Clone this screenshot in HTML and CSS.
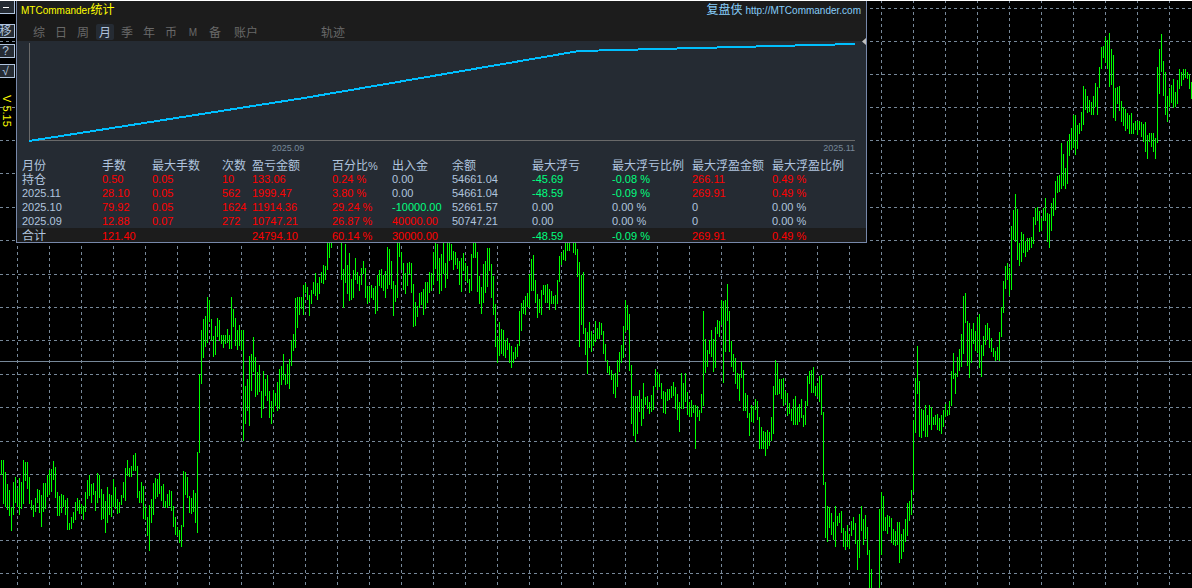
FILE: index.html
```html
<!DOCTYPE html>
<html lang="zh-CN">
<head>
<meta charset="utf-8">
<title>MTCommander统计</title>
<link rel="stylesheet" href="styles.css">
</head>
<body>
<main class="stage">
  <svg class="market" aria-hidden="true">
    <path class="grid" id="grid"/>
    <path class="price" d="M0 361.5H4000"/>
    <path class="bars" id="bars"/>
  </svg>
  <div class="topline"></div>
  <div class="overlay">
    <aside class="rail">
      <button class="tool tool-first" type="button" aria-label="最小化"><svg width="6" height="2"><path class="dash" d="M0 1H6"/></svg></button>
      <button class="tool" type="button">移</button>
      <button class="tool" type="button">?</button>
      <button class="tool" type="button">√</button>
      <span class="version">V 5.15</span>
    </aside>
    <section class="panel">
      <header class="head">
        <h1 class="title">MTCommander<span class="cjk">统计</span></h1>
        <a class="site" href="http://MTCommander.com"><span class="cjk">复盘侠</span> http://MTCommander.com</a>
      </header>
      <nav class="tabs">
        <button class="tab" type="button">综</button>
        <button class="tab" type="button">日</button>
        <button class="tab" type="button">周</button>
        <button class="tab active" type="button">月</button>
        <button class="tab" type="button">季</button>
        <button class="tab" type="button">年</button>
        <button class="tab" type="button">币</button>
        <button class="tab latin" type="button">M</button>
        <button class="tab" type="button">备</button>
        <button class="tab wide" type="button">账户</button>
        <button class="tab wide track" type="button">轨迹</button>
        <svg class="marker" width="4" height="7" viewBox="0 0 4 7"><path d="M4 0V7L0 3.5Z"/></svg>
      </nav>
      <div class="curve">
        <svg class="plot" viewBox="0 0 826 101" preserveAspectRatio="none">
          <path class="axis" d="M.5 2V99.5H826"/>
          <path class="equity" d="M0 100L275 57L550 10L826 3"/>
        </svg>
        <div class="months"><span>2025.09</span><span></span><span>2025.11</span></div>
      </div>
      <table class="stats">
        <colgroup><col class="w80"><col class="w50"><col class="w70"><col class="w30"><col class="w80"><col class="w60"><col class="w60"><col class="w80"><col class="w80"><col class="w80"><col class="w80"><col></colgroup>
        <thead>
          <tr><th>月份</th><th>手数</th><th>最大手数</th><th>次数</th><th>盈亏金额</th><th>百分比<span class="pct">%</span></th><th>出入金</th><th>余额</th><th>最大浮亏</th><th>最大浮亏比例</th><th>最大浮盈金额</th><th>最大浮盈比例</th></tr>
        </thead>
        <tbody>
          <tr><td class="cjk">持仓</td><td class="up">0.50</td><td class="up">0.05</td><td class="up">10</td><td class="up">133.06</td><td class="up">0.24 %</td><td>0.00</td><td>54661.04</td><td class="down">-45.69</td><td class="down">-0.08 %</td><td class="up">266.11</td><td class="up">0.49 %</td></tr>
          <tr><td>2025.11</td><td class="up">28.10</td><td class="up">0.05</td><td class="up">562</td><td class="up">1999.47</td><td class="up">3.80 %</td><td>0.00</td><td>54661.04</td><td class="down">-48.59</td><td class="down">-0.09 %</td><td class="up">269.91</td><td class="up">0.49 %</td></tr>
          <tr><td>2025.10</td><td class="up">79.92</td><td class="up">0.05</td><td class="up">1624</td><td class="up">11914.36</td><td class="up">29.24 %</td><td class="down">-10000.00</td><td>52661.57</td><td>0.00</td><td>0.00 %</td><td>0</td><td>0.00 %</td></tr>
          <tr><td>2025.09</td><td class="up">12.88</td><td class="up">0.07</td><td class="up">272</td><td class="up">10747.21</td><td class="up">26.87 %</td><td class="up">40000.00</td><td>50747.21</td><td>0.00</td><td>0.00 %</td><td>0</td><td>0.00 %</td></tr>
        </tbody>
        <tfoot>
          <tr><td class="cjk">合计</td><td class="up">121.40</td><td></td><td></td><td class="up">24794.10</td><td class="up">60.14 %</td><td class="up">30000.00</td><td></td><td class="down">-48.59</td><td class="down">-0.09 %</td><td class="up">269.91</td><td class="up">0.49 %</td></tr>
        </tfoot>
      </table>
    </section>
  </div>
</main>
<script src="chart.js"></script>
</body>
</html>
```

FILE: styles.css
```css
* {
  box-sizing: border-box;
}

body {
  margin: 0;
  background: #000;
  color: #b0c4de;
  font-family: "Liberation Sans", "Noto Sans CJK SC", sans-serif;
  font-size: 11px;
  line-height: 14px;
}

button {
  padding: 0;
  border: 0;
  background: none;
  color: inherit;
  font: inherit;
}

.stage {
  position: relative;
  min-height: 100vh;
  overflow: hidden;
}

.market {
  position: absolute;
  inset: 0;
  width: 100%;
  height: 100%;
}

.market path {
  fill: none;
  stroke-width: 1;
  shape-rendering: crispEdges;
}

.market .grid {
  stroke: #778899;
  stroke-dasharray: 3 3;
}

.market .price {
  stroke: #778899;
}

.market .bars {
  stroke: #00ff00;
}

.topline {
  position: relative;
  height: 1px;
  background: #fff;
}

.overlay {
  position: relative;
  display: flex;
  align-items: flex-start;
}

.rail {
  display: flex;
  flex: none;
  flex-direction: column;
  gap: 6px;
  width: 16px;
}

.tool {
  display: flex;
  align-items: center;
  justify-content: center;
  width: 15px;
  height: 14px;
  padding-right: 3px;
  border: 1px solid #b0c4de;
  border-left: 0;
  background: #252b33;
  font-family: "Liberation Sans", "Noto Sans CJK SC", sans-serif;
  font-size: 12px;
  line-height: 12px;
  white-space: nowrap;
}

.tool-first {
  height: 13px;
  margin-bottom: 4px;
  border-top: 0;
}

.dash {
  stroke: #fff;
  stroke-width: 1;
  shape-rendering: crispEdges;
}

.version {
  margin-top: 11px;
  color: #ff0;
  font-size: 11px;
  line-height: 18px;
  writing-mode: vertical-rl;
}

.panel {
  flex: 0 1 851px;
  border: 1px solid #7788aa;
  border-top: 0;
  background: #252b33;
}

.head {
  display: flex;
  justify-content: space-between;
  padding: 0 5px 0 4px;
  background: #1c1c1c;
  font-size: 10px;
  line-height: 19px;
}

.title {
  margin: 0;
  color: #ff0;
  font-size: 10px;
  font-weight: 400;
}

.cjk {
  font-size: 12px;
}

.site {
  color: #87cefa;
  text-decoration: none;
}

.tabs {
  position: relative;
  display: flex;
  gap: 4px;
  padding: 4px 12px 1px 13px;
  background: #1c1c1c;
}

.tab {
  width: 18px;
  height: 16px;
  padding-top: 1px;
  border-radius: 2px;
  color: #696969;
  font-size: 12px;
  line-height: 16px;
}

.tab.active {
  background: #252b33;
  color: #b0c4de;
}

.tab.latin {
  font-size: 10px;
}

.tab.wide {
  width: 36px;
}

.tab.track {
  margin-left: 47px;
}

.marker {
  position: absolute;
  right: 0;
  bottom: -4px;
  fill: #c0c0c0;
}

.curve {
  padding: 0 11px 4px 12px;
}

.plot {
  display: block;
  width: 100%;
  height: 101px;
  overflow: visible;
}

.plot path {
  fill: none;
  shape-rendering: crispEdges;
  vector-effect: non-scaling-stroke;
}

.axis {
  stroke: #696969;
}

.equity {
  stroke: #00bfff;
  stroke-width: 2;
}

.months {
  display: grid;
  grid-template-columns: repeat(3, 1fr);
  color: #778899;
  font-size: 9px;
  line-height: 12px;
  text-align: right;
}

.stats {
  width: 100%;
  border-collapse: collapse;
  table-layout: fixed;
}

.stats th,
.stats td {
  height: 14px;
  padding: 0 0 0 5px;
  font-weight: 400;
  line-height: 14px;
  text-align: left;
  white-space: nowrap;
}

.stats th {
  font-size: 12px;
}

.stats th,
.stats td.cjk,
.stats tfoot td {
  padding-top: 2px;
  line-height: 12px;
}

.stats .pct {
  font-size: 11px;
}

.stats .up {
  color: #f00;
}

.stats .down {
  color: #00ff7f;
}

.stats tfoot {
  background: #1c1c1c;
}

.w30 {
  width: 30px;
}

.w50 {
  width: 50px;
}

.w60 {
  width: 60px;
}

.w70 {
  width: 70px;
}

.w80 {
  width: 80px;
}
```

FILE: chart.js
```js
// Each run starts at pixel column x; bars are high-low pairs, two pixels apart.
const runs = [
  { x: 1, bars: "460-475 460-504 472-507 484-510 490-516 507-531 482-515 477-503 488-507 478-515 482-509 460-504 462-481 462-489 477-504 500-510 505-517 498-512 489-503 490-513 495-527 483-512 483-509 475-497 470-495 469-492 461-480 467-498 492-516 496-516 494-513 495-507 500-515 498-530 523-530 517-529 512-523 502-520 498-511 500-514" },
  { x: 81, bars: "504-514 506-520 492-512 480-499 475-496 484-503 483-495 491-511 473-503 475-498 489-520 494-519 501-533 487-523 494-515 495-517 479-507 487-509 499-514 502-513 495-505 482-498 468-501 460-476 468-477 466-477 455-471 453-471 466-498 491-503 482-503 486-519 506-520 517-536 505-551 499-523 483-515 478-499 479-497 473-494" },
  { x: 161, bars: "486-501 484-507 501-508 494-508 490-506 491-511 506-527 517-535 527-536 530-543 525-547 471-527 472-495 477-498 496-513 498-514 490-512 493-523 452-533" },
  { x: 199, bars: "374-453 330-384 319-358 316-347 297-343 300-322 319-341 336-357 326-355 318-337 320-341 335-344 335-348 335-344 329-343 335-349 297-349 309-327 318-346 330-350 325-346 330-350 330-441 386-424 379-411 356-426 354-391 337-372 357-397 372-395 365-392 391-418 371-409 379-396 375-401 391-418 401-424 390-412 393-406 382-411 369-409" },
  { x: 281, bars: "366-385 354-380 374-385 364-384 359-389 340-366 334-351 298-348 297-328 297-315 297-309 285-315 283-293 287-300 295-316 290-304 282-294 273-296 283-300 277-294 272-283 265-284 266-280 240-270 240-258 240-248" },
  { x: 341, bars: "240-280 269-308 244-283 265-294 253-301 279-300 270-298 258-280 272-284 276-291 268-285 261-274 268-298 286-304 286-302 285-298 288-300 286-314 275-311 270-286 269-288 275-291 271-298 247-289 249-285 261-289 281-316 285-302 240-298 240-257" },
  { x: 401, bars: "252-270 263-290 273-294 263-286 262-274 263-293 284-327 302-326 306-317 293-308 292-305 289-315 282-309 282-303 272-293 273-291 252-285 240-269 244-281 258-294 254-291 240-274 263-288 240-279 240-261 244-260 251-270 252-265 258-269 261-285 258-292 253-271 263-281 266-283 279-293 254-291 240-258 240-258 252-292 276-304" },
  { x: 481, bars: "287-314 264-303 261-293 248-287 248-271 264-298 276-315 304-347 337-363 322-356 329-354 330-356 340-358 338-350 343-363 346-368 352-363 347-359 344-357 311-346 303-331 300-314 296-315 293-307 274-308 259-291 255-291 280-303 294-318 299-313 290-315 285-295 285-303 284-303 289-310 291-304 296-304 295-310 280-304 256-282" },
  { x: 561, bars: "253-265 250-260 240-261 240-251 240-251" },
  { x: 573, bars: "240-253 240-255 249-277 262-347 275-325 272-334 328-355 332-374 322-348 331-352 334-346 321-342 328-339 322-339 323-335 331-354 344-361 360-373 366-375 370-380 374-394 373-398 360-387 352-372" },
  { x: 621, bars: "345-363 326-358 300-332 305-330 314-371 365-424 396-436 396-442 396-434 390-412 399-426 383-419 397-405 396-409 402-414 395-412 386-410 369-387 372-390 374-387 383-399 391-413 392-414 389-401 389-400 386-398 382-396 387-409 394-420 402-432 373-409 383-409 373-402 392-415 402-417 400-417 405-413 405-449 406-417 410-421" },
  { x: 701, bars: "394-413 311-406 339-373 350-367 340-354 330-357 339-372 327-368 320-334 321-337 300-325 301-383 300-352 284-321 311-352 341-367 354-372 358-384 373-389 374-401 362-378 370-411 393-411 395-418 413-436 405-422 406-423 399-410 401-420 417-449 427-449 431-449 432-456 430-449 432-446 417-441 386-434 360-395 363-395 379-394" },
  { x: 781, bars: "379-399 378-406 391-403 393-416 403-414 409-421 399-425 396-425 407-425 404-422 399-418 415-427 401-425 376-406 371-384 370-393 367-393 386-396 383-397 376-402 375-415 412-485 482-538 506-542 507-528 513-535 522-540 506-547 516-526 513-523 511-533 528-547 531-550 525-547 534-549 521-536 517-530 523-544 540-570 514-558" },
  { x: 861, bars: "506-531 519-545 515-539 527-555 550-588 569-588" },
  { x: 879, bars: "509-588 492-555 496-531 517-531 515-534 516-527 518-543 529-545 531-546 522-545 522-563 534-559 529-552 519-542 503-536 501-521 490-515 420-492 378-433 346-394 381-437 409-438 410-431 405-437 415-437 405-425 407-430 417-425 415-425 414-430 418-431" },
  { x: 941, bars: "415-434 410-427 404-417 410-416 401-415 371-406 353-379 373-394 357-377 349-371 334-367 296-354 293-323 321-366 323-378 329-363 323-344 331-351 317-353 314-368 345-377 336-356 325-345 323-340 328-348 338-352 348-357 351-361 347-360 332-361" },
  { x: 1001, bars: "307-337 281-313 266-289 263-280 268-296 226-290 210-240 194-242 209-260 243-266 232-262 234-253 241-257 238-252 238-250 237-248 217-244 208-225 207-221 211-232 218-231 208-221 198-221 213-242 214-248 203-231 198-216 181-210 176-193 175-192 143-189 154-186 168-189 141-184 134-156 128-150 115-148 115-155 125-149 123-134" },
  { x: 1081, bars: "112-131 86-125 89-110 96-113 100-112 102-115 96-115 83-107 87-115 67-88 47-69 46-58 37-63 40-69 33-87 49-85 55-118 88-121 87-104 86-111 101-122 107-126 109-131 113-129 115-134 113-134 123-134 121-130 121-135 121-130 122-137 124-142 122-152 135-159 133-142 133-147 133-152 138-159 67-143 49-94" },
  { x: 1161, bars: "34-72 61-96 72-115 96-122 88-107 85-103 79-108 92-107 80-104 69-89 72-86 69-80 69-78 72-79 74-89 82-99" }
];

const barPath = runs.map(run => run.bars.split(" ").map((bar, i) => {
  const [high, low] = bar.split("-");
  return `M${run.x + i * 2 + 0.5} ${high}V${low}`;
}).join("")).join("");
document.getElementById("bars").setAttribute("d", barPath);

const rows = [8, 41, 74, 107, 140, 173, 207, 240, 274, 307, 340, 374, 407, 441, 474, 507, 540, 573];
let gridPath = rows.map(y => `M0 ${y + 0.5}H3840`).join("");
for (let x = 17; x < 3840; x += 32) {
  gridPath += `M${x + 0.5} 0V2160`;
}
document.getElementById("grid").setAttribute("d", gridPath);
```
